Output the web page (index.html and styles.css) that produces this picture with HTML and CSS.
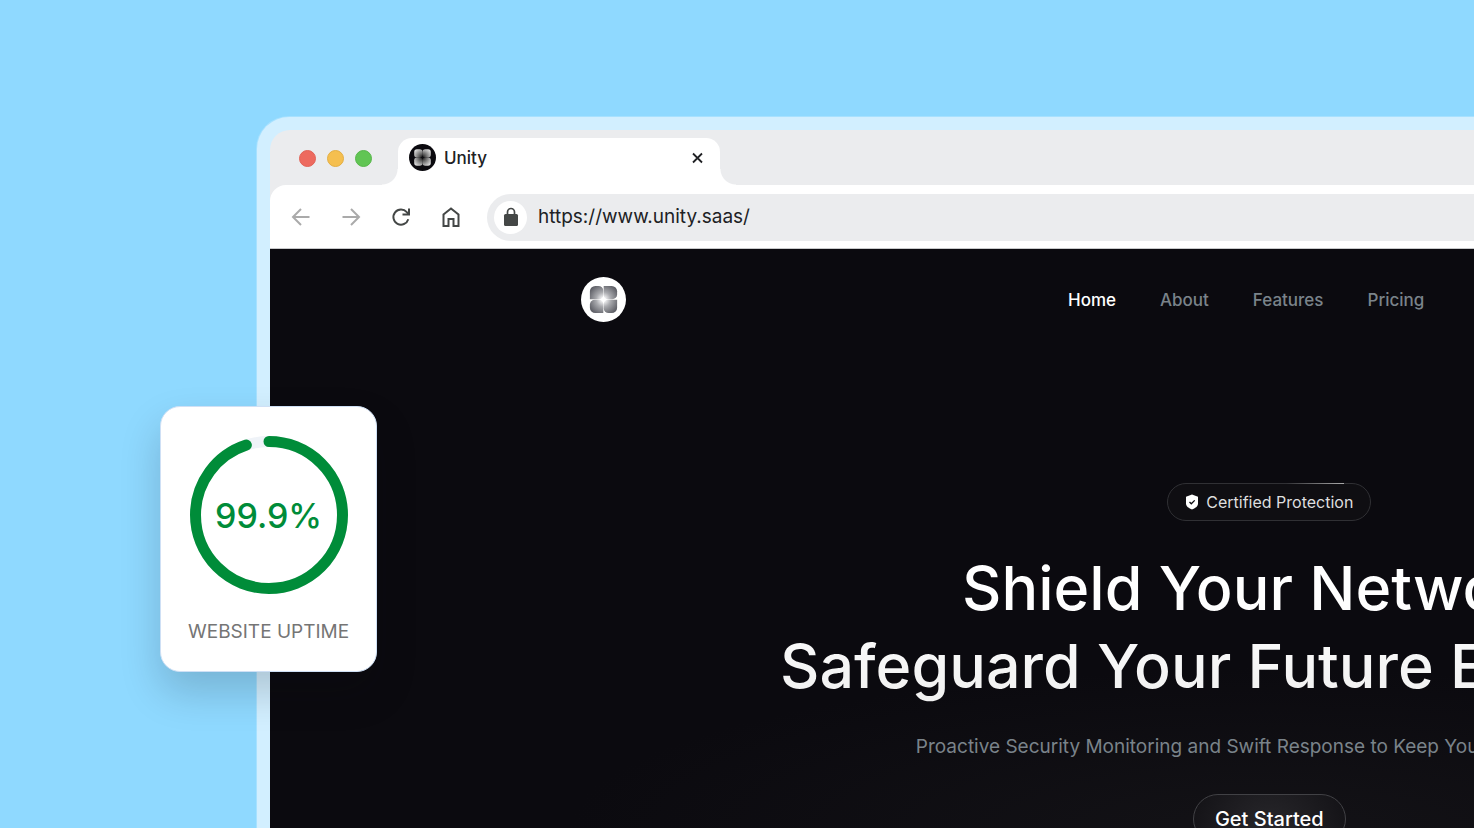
FILE: index.html
```html
<!DOCTYPE html>
<html lang="en">
<head>
<meta charset="utf-8">
<title>Unity</title>
<link rel="stylesheet" href="styles.css">
</head>
<body>
<main class="stage">
  <section class="browser">
    <div class="window">
      <div class="tab-strip">
        <div class="lights"><span class="light red"></span><span class="light amber"></span><span class="light green"></span></div>
        <div class="tab">
          <svg class="favicon" viewBox="0 0 44 44" aria-hidden="true">
            <defs><radialGradient id="fav" gradientUnits="userSpaceOnUse" cx="22" cy="22" r="18"><stop offset="0" stop-color="#111"/><stop offset=".35" stop-color="#666"/><stop offset="1" stop-color="#eee"/></radialGradient></defs>
            <circle cx="22" cy="22" r="22" fill="#0b0a0f"/>
            <g fill="url(#fav)"><rect x="8.500" y="8.500" width="13.500" height="13.500" rx="4.500"/><rect x="22" y="8.500" width="13.500" height="13.500" rx="4.500"/><rect x="8.500" y="22" width="13.500" height="13.500" rx="4.500"/><rect x="22" y="22" width="13.500" height="13.500" rx="4.500"/></g>
          </svg>
          <span class="tab-title">Unity</span>
          <button class="tab-close" aria-label="Close tab"><svg viewBox="0 0 12 12"><path d="M1.500 1.500l9 9M10.500 1.500l-9 9"/></svg></button>
        </div>
      </div>
      <div class="toolbar">
        <button class="tool muted" aria-label="Back"><svg viewBox="0 0 20 20"><path d="M18.500 10H2.500M10 2L2 10l8 8"/></svg></button>
        <button class="tool muted" aria-label="Forward"><svg viewBox="0 0 20 20"><path d="M1.500 10h16M10 2l8 8-8 8"/></svg></button>
        <button class="tool" aria-label="Reload"><svg viewBox="0 0 20 20"><path d="M17.300 12.200A7.600 7.600 0 1 1 15.800 5.100L17.500 7"/><path d="M18 1.500V7.500H11.500"/></svg></button>
        <button class="tool" aria-label="Home"><svg viewBox="0 0 20 20"><path d="M2.500 19V7.500L10 1.500l7.500 6V19H12.500V12H7.500v7z"/></svg></button>
        <label class="address">
          <span class="lock"><svg viewBox="0 0 16 20"><rect x="1" y="7" width="14" height="12" rx="1.500" fill="#444746"/><path d="M4.500 8V5a3.500 3.500 0 0 1 7 0v3" fill="none" stroke="#444746" stroke-width="1.700"/></svg></span>
          <input class="url" type="text" value="https://www.unity.saas/" aria-label="Address">
        </label>
      </div>
      <div class="site">
        <div class="page">
          <header class="site-header">
            <a class="logo" href="#" aria-label="Unity">
              <svg viewBox="0 0 44 44">
                <defs><radialGradient id="logo" gradientUnits="userSpaceOnUse" cx="22" cy="22" r="18"><stop offset="0" stop-color="#fff"/><stop offset=".15" stop-color="#e8e8ea"/><stop offset=".4" stop-color="#a9aaae"/><stop offset="1" stop-color="#4b4c54"/></radialGradient></defs>
                <circle cx="22" cy="22" r="22" fill="#fff"/>
                <g fill="url(#logo)">
                  <path d="M8.700 21.800V14A5.300 5.300 0 0 1 14 8.700H17A4.800 4.800 0 0 1 21.800 13.500V17.600A4.200 4.200 0 0 1 17.600 21.800Z"/>
                  <path d="M22.200 8.700H30A5.300 5.300 0 0 1 35.300 14V17A4.800 4.800 0 0 1 30.500 21.800H26.400A4.200 4.200 0 0 1 22.200 17.600Z"/>
                  <path d="M35.300 22.200V30A5.300 5.300 0 0 1 30 35.300H27A4.800 4.800 0 0 1 22.200 30.500V26.400A4.200 4.200 0 0 1 26.400 22.200Z"/>
                  <path d="M21.800 35.300H14A5.300 5.300 0 0 1 8.700 30V27A4.800 4.800 0 0 1 13.500 22.200H17.600A4.200 4.200 0 0 1 21.800 26.400Z"/>
                </g>
              </svg>
            </a>
            <nav class="nav"><a class="current" href="#">Home</a><a href="#">About</a><a href="#">Features</a><a href="#">Pricing</a></nav>
          </header>
          <div class="hero">
            <div class="badge">
              <svg viewBox="0 0 14 16" aria-hidden="true"><path d="M7 0.500L13 2.800V9.500C13 12.500 10 14.300 7 15.500C4 14.300 1 12.500 1 9.500V2.800Z" fill="#fff"/><path d="M4.500 8l1.800 1.800L9.700 6.400" fill="none" stroke="#0b0a0f" stroke-width="1.300"/></svg>
              <span>Certified Protection</span>
            </div>
            <h1 class="headline">Shield Your Network,<br>Safeguard Your Future Endeavors</h1>
            <p class="lead">Proactive Security Monitoring and Swift Response to Keep Your Business Safe.</p>
            <button class="cta">Get Started</button>
          </div>
        </div>
      </div>
    </div>
  </section>
  <aside class="uptime">
    <div class="gauge">
      <svg viewBox="0 0 158 158" aria-hidden="true"><circle class="track" cx="79" cy="79" r="73.500"/><circle class="value" cx="79" cy="79" r="73.500" pathLength="100" transform="rotate(-90 79 79)"/></svg>
      <strong class="percent">99.9%</strong>
    </div>
    <span class="uptime-label">WEBSITE UPTIME</span>
  </aside>
</main>
</body>
</html>
```
FILE: styles.css
```css
* { box-sizing: border-box; }
body {
  margin: 0;
  overflow: hidden;
  background: #8fd9ff;
  font-family: Inter, "Liberation Sans", sans-serif;
}
button { border: 0; padding: 0; background: none; font: inherit; color: inherit; }
a { color: inherit; text-decoration: none; }
svg { display: block; }

.stage {
  position: relative;
  display: flex;
  height: 100vh;
  padding: 117px 0 0 257px;
  overflow: hidden;
}
.browser {
  flex: 1;
  min-width: 0;
  display: flex;
  padding: 13px 0 0 13px;
  border-radius: 32px 0 0 0;
  background: #d2efff;
  box-shadow: 0 0 0 1px #a7e1ff;
}
.window {
  flex: 1;
  min-width: 0;
  display: flex;
  flex-direction: column;
  border-radius: 20px 0 0 0;
  overflow: hidden;
  background: #ebecee;
}
.tab-strip {
  display: flex;
  align-items: flex-end;
  gap: 26px;
  height: 55px;
  padding-left: 29px;
}
.lights { display: flex; gap: 11px; padding-bottom: 18px; }
.light { width: 17px; height: 17px; border-radius: 50%; border: 1px solid; }
.red { background: #ed6a5f; border-color: #e06257; }
.amber { background: #f5bf4f; border-color: #e2ae43; }
.green { background: #61c554; border-color: #57b64a; }
.tab {
  position: relative;
  display: flex;
  align-items: center;
  gap: 8px;
  width: 322px;
  height: 47px;
  padding: 0 15px 8px 11px;
  border-radius: 14px 14px 0 0;
  background: #fff;
}
.tab::before, .tab::after {
  content: "";
  position: absolute;
  bottom: 0;
  width: 16px;
  height: 16px;
}
.tab::before { right: 100%; background: radial-gradient(circle at 0 0, transparent 15px, #fff 16px); }
.tab::after { left: 100%; background: radial-gradient(circle at 100% 0, transparent 15px, #fff 16px); }
.favicon { width: 27px; height: 27px; }
.tab-title { flex: 1; font-size: 17px; font-weight: 500; line-height: 24px; color: #202124; }
.tab-close svg { width: 15px; height: 12px; fill: none; stroke: #202124; stroke-width: 1.800; }

.toolbar {
  display: flex;
  align-items: center;
  gap: 30px;
  height: 64px;
  padding: 1px 0 0 21px;
  border-radius: 16px 0 0 0;
  border-bottom: 1px solid #c8c9cb;
  background: #fff;
}
.tool svg { width: 20px; height: 20px; fill: none; stroke: #444746; stroke-width: 2; }
.tool.muted svg { stroke: #aaa; }
.address {
  flex: 1;
  display: flex;
  align-items: center;
  gap: 11px;
  height: 47px;
  margin-left: -4px;
  padding-left: 7px;
  border-radius: 24px 0 0 24px;
  background: #ebecee;
}
.lock {
  display: flex;
  align-items: center;
  justify-content: center;
  width: 33px;
  height: 33px;
  border-radius: 50%;
  background: #fff;
}
.lock svg { width: 16px; height: 20px; }
.url { flex: 1; border: 0; padding: 0; outline: 0; background: none; font: 400 19px/28px Inter, sans-serif; color: #202124; }

.site {
  flex: 1;
  overflow: hidden;
  color: #fff;
  background: radial-gradient(ellipse 700px 160px at 1000px 100%, #131216, transparent), #0b0a0f;
}
/* The page is wider than the visible part of the window. */
.page { width: 166%; padding-top: 28px; }
.site-header { display: flex; align-items: center; gap: 442px; padding-left: 311px; }
.logo svg { width: 45px; height: 45px; }
.nav { display: flex; gap: 44px; font-size: 17px; font-weight: 500; line-height: 24px; color: #7a838a; }
.nav .current { color: #fff; }
.hero { display: flex; flex-direction: column; align-items: center; padding-top: 161px; white-space: nowrap; }
.badge {
  position: relative;
  display: flex;
  align-items: center;
  gap: 7px;
  height: 38px;
  padding: 0 17px;
  border: 1px solid #303034;
  border-radius: 19px;
  background: #0f0e12;
  font-size: 16px;
  color: #dededf;
}
.badge::after {
  content: "";
  position: absolute;
  top: -1px;
  right: 26px;
  width: 58px;
  height: 1px;
  background: linear-gradient(90deg, transparent, #aaa);
}
.badge svg { width: 14px; height: 16px; }
.headline {
  margin: 28px 0;
  font-size: 61px;
  font-weight: 500;
  line-height: 78px;
  text-align: center;
  color: transparent;
  background: linear-gradient(#fff 30%, #f0f0f0);
  background-clip: text;
}
.lead { margin: 0 0 33px; font-size: 19px; line-height: 28px; color: #7a838a; }
.cta {
  height: 50px;
  padding: 0 21px;
  border: 1px solid #414145;
  border-radius: 25px;
  background: radial-gradient(circle at 50% 80%, #29282c, #131216);
  font-size: 20px;
  font-weight: 500;
}

.uptime {
  position: absolute;
  top: 406px;
  left: 160px;
  display: flex;
  flex-direction: column;
  align-items: center;
  gap: 25px;
  padding: 29px 27px 26px;
  border: 1px solid #cfe0f5;
  border-radius: 20px;
  background: #fff;
  box-shadow: 0 20px 40px rgba(11, 10, 15, .18);
}
.gauge { display: grid; place-items: center; }
.gauge > * { grid-area: 1 / 1; }
.gauge svg { width: 158px; height: 158px; fill: none; stroke-width: 11; }
.track { stroke: #eff3f8; }
.value { stroke: #008c39; stroke-linecap: round; stroke-dasharray: 95 100; }
.percent { font-size: 34px; font-weight: 500; color: #008c39; }
.uptime-label { font-size: 19px; line-height: 26px; color: #757575; }
```
